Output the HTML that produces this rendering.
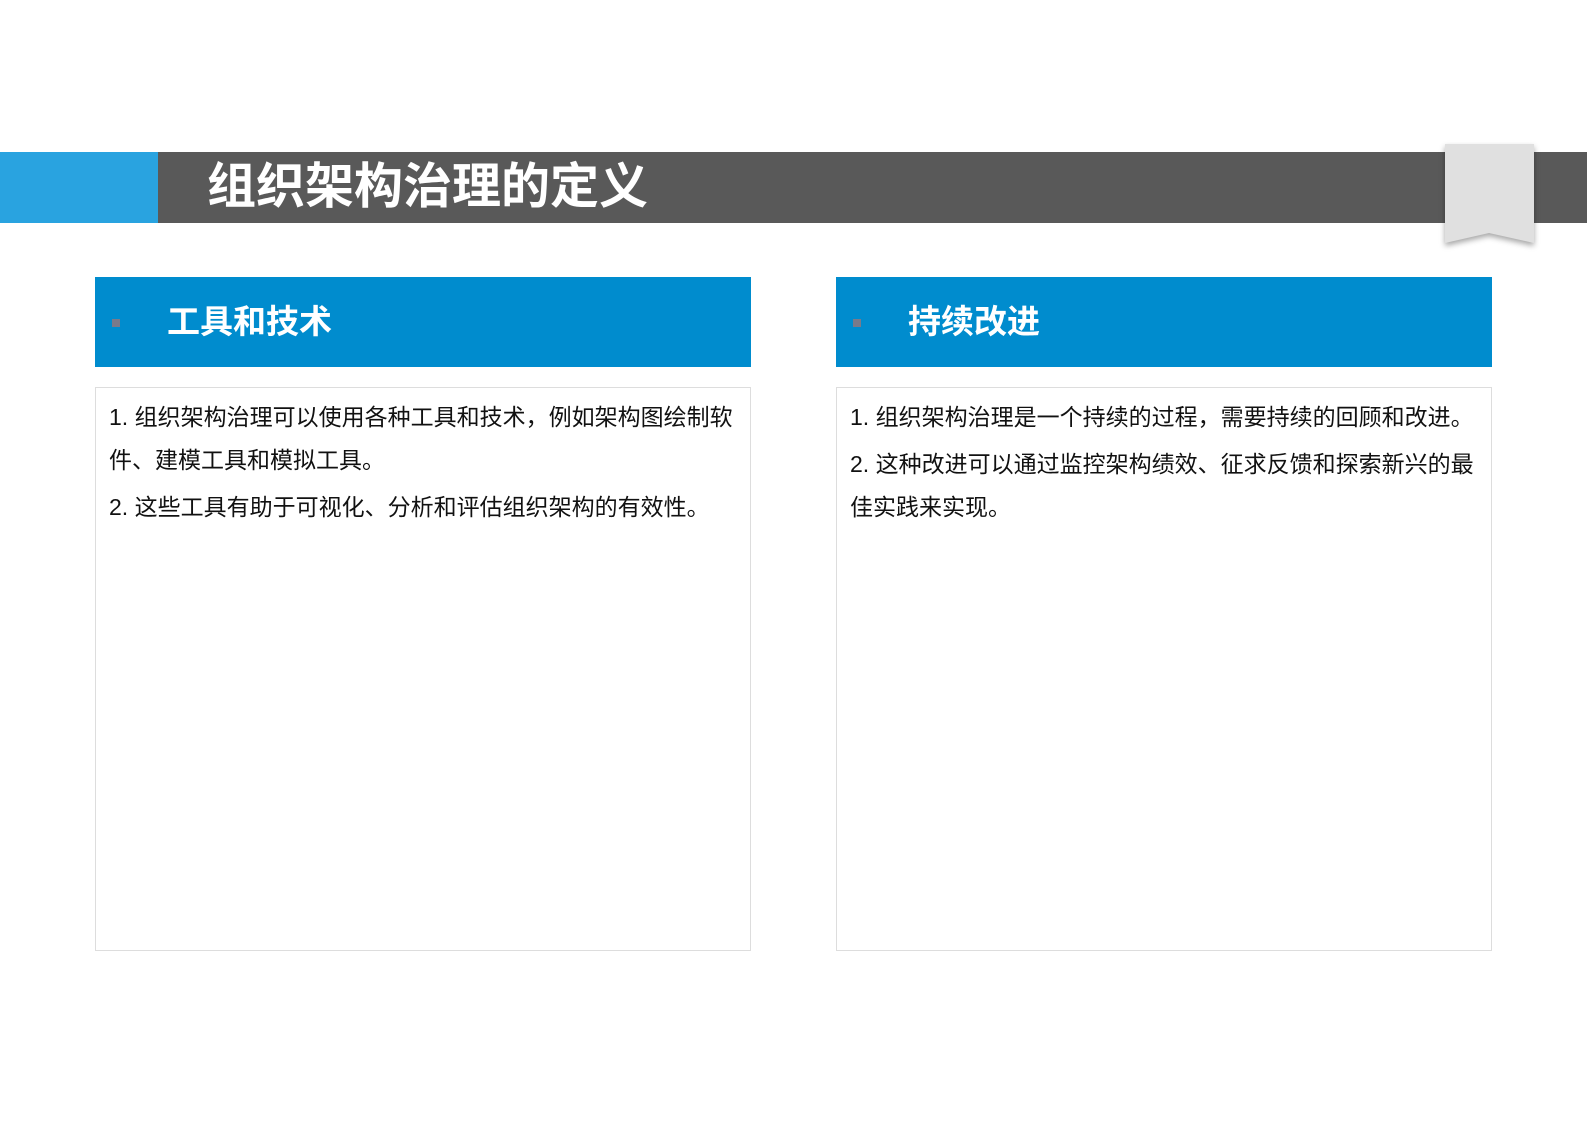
<html><head><style>
body{margin:0;width:1587px;height:1122px;background:#fff;position:relative;overflow:hidden;font-family:"Liberation Sans","Noto Sans CJK SC",sans-serif}
.bar{position:absolute;left:0;top:152px;width:1587px;height:71px;background:#595959}
.blue{position:absolute;left:0;top:152px;width:158px;height:71px;background:#29a3e0}
.title{position:absolute;left:207px;top:152px;height:71px;line-height:71px;color:#fff;font-size:49px;font-weight:bold}
.rib{position:absolute;left:1445px;top:144px;width:89px;height:99px;filter:drop-shadow(0 3px 3px rgba(0,0,0,.35))}
.hd{position:absolute;top:277px;width:656px;height:90px;background:#008cce}
.hd span{position:absolute;left:72px;top:0;line-height:90px;color:#fff;font-size:33px;font-weight:bold}
.hd i{position:absolute;left:17px;top:42px;width:8px;height:8px;background:#7a7a8a}
.bd{position:absolute;top:387px;width:654px;height:554px;border:1px solid #ddd;padding-top:8px}
.bd p{margin:0;padding:0 12px 0 13px;font-size:23px;color:#111;line-height:43px}
.bd p+p{margin-top:4px}
</style></head><body>
<div class="bar"></div><div class="blue"></div>
<div class="title">组织架构治理的定义</div>
<svg class="rib" viewBox="0 0 89 99"><polygon points="0,0 89,0 89,99 44,89 0,99" fill="#e0e0e0"/></svg>
<div class="hd" style="left:95px"><i></i><span>工具和技术</span></div>
<div class="hd" style="left:836px"><i></i><span>持续改进</span></div>
<div class="bd" style="left:95px"><p>1. 组织架构治理可以使用各种工具和技术，例如架构图绘制软件、建模工具和模拟工具。</p><p>2. 这些工具有助于可视化、分析和评估组织架构的有效性。</p></div>
<div class="bd" style="left:836px"><p>1. 组织架构治理是一个持续的过程，需要持续的回顾和改进。</p><p>2. 这种改进可以通过监控架构绩效、征求反馈和探索新兴的最佳实践来实现。</p></div>
</body></html>
